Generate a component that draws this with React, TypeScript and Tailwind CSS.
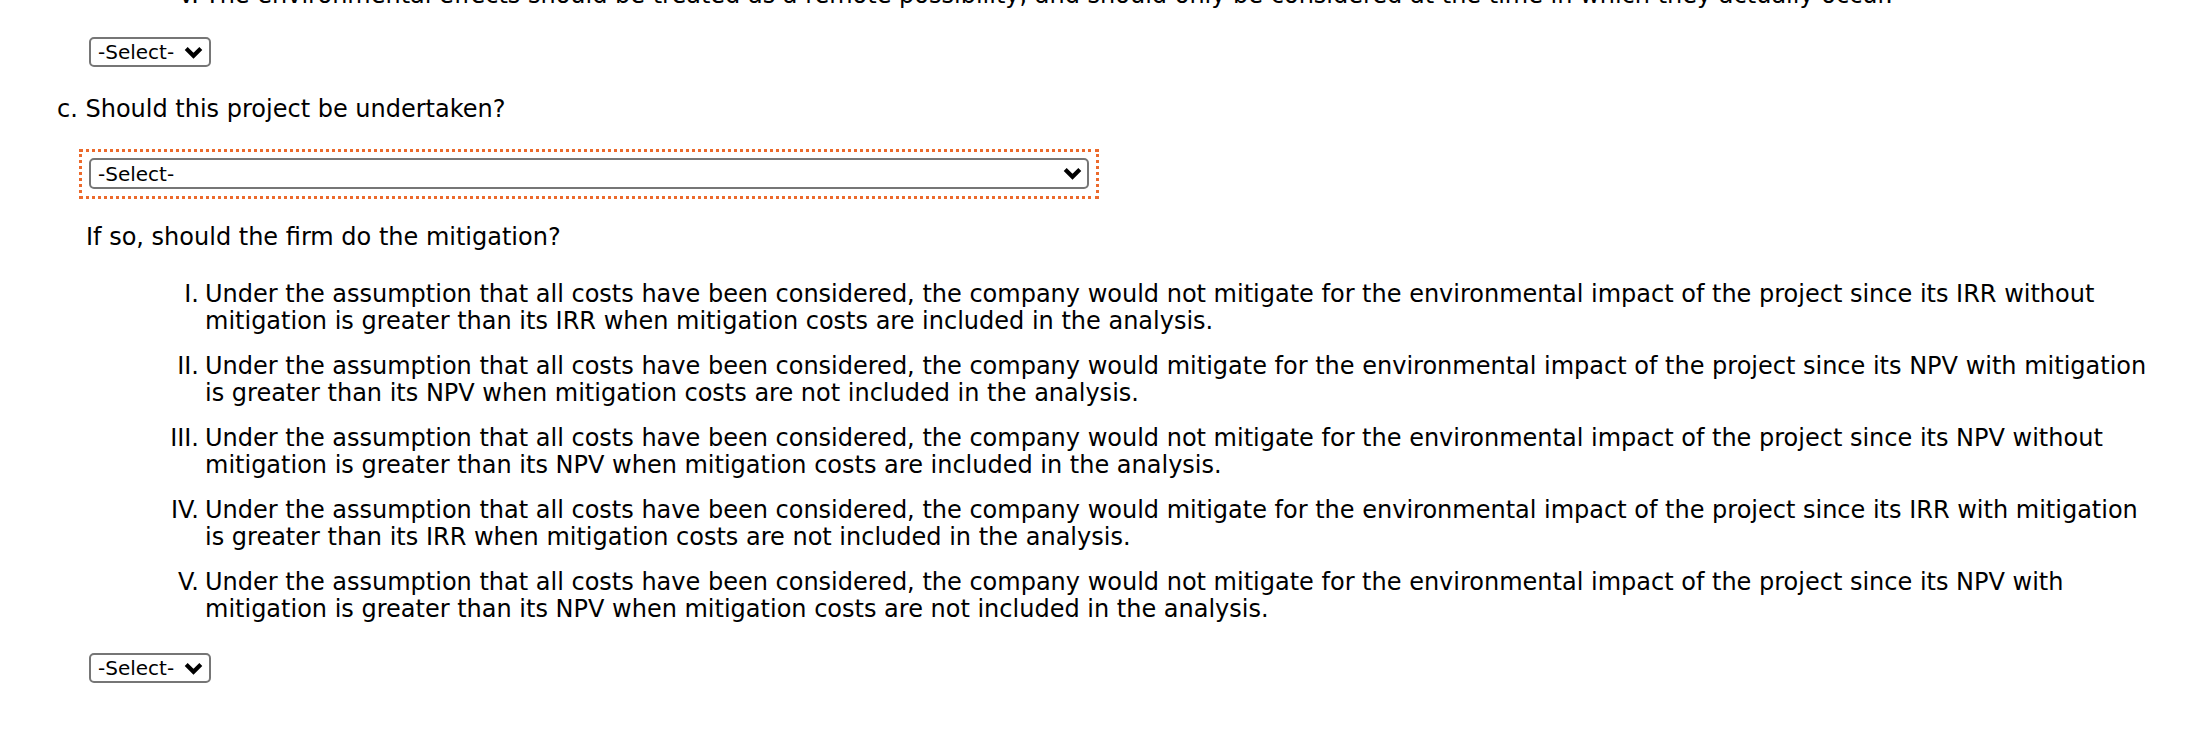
import React from "react";

const items = [
  {
    n: "I.",
    lines: [
      "Under the assumption that all costs have been considered, the company would not mitigate for the environmental impact of the project since its IRR without",
      "mitigation is greater than its IRR when mitigation costs are included in the analysis.",
    ],
  },
  {
    n: "II.",
    lines: [
      "Under the assumption that all costs have been considered, the company would mitigate for the environmental impact of the project since its NPV with mitigation",
      "is greater than its NPV when mitigation costs are not included in the analysis.",
    ],
  },
  {
    n: "III.",
    lines: [
      "Under the assumption that all costs have been considered, the company would not mitigate for the environmental impact of the project since its NPV without",
      "mitigation is greater than its NPV when mitigation costs are included in the analysis.",
    ],
  },
  {
    n: "IV.",
    lines: [
      "Under the assumption that all costs have been considered, the company would mitigate for the environmental impact of the project since its IRR with mitigation",
      "is greater than its IRR when mitigation costs are not included in the analysis.",
    ],
  },
  {
    n: "V.",
    lines: [
      "Under the assumption that all costs have been considered, the company would not mitigate for the environmental impact of the project since its NPV with",
      "mitigation is greater than its NPV when mitigation costs are not included in the analysis.",
    ],
  },
];

const Chevron = () => (
  <svg width="19" height="13" viewBox="0 0 19 13" className="shrink-0">
    <path d="M2.2 2.6 L9.5 9.8 L16.8 2.6" fill="none" stroke="black" strokeWidth={4.2} />
  </svg>
);

// fake select box, drawn the way Chrome on mac renders it at 2x
const SelectBox = ({ wide }: { wide?: boolean }) => (
  <div
    className={
      wide
        ? "flex items-center justify-between w-[1000px] h-[31px] border-2 border-[#767676] rounded-[5px] bg-white pl-[7px] pr-[5px] text-[20px] leading-none"
        : "flex items-center justify-between w-[122px] h-[30px] border-2 border-[#767676] rounded-[5px] bg-white pl-[7px] pr-[6px] text-[20px] leading-none"
    }
  >
    <span>-Select-</span>
    <Chevron />
  </div>
);

const Row = ({ n, lines }: { n: string; lines: string[] }) => (
  <div className="flex">
    <div className="w-[205px] shrink-0 text-right pr-[6px]">{n}</div>
    <div className="flex flex-col">
      {lines.map((l, i) => (
        <span key={i} className="whitespace-nowrap">
          {l}
        </span>
      ))}
    </div>
  </div>
);

export default function App() {
  return (
    <div className="h-[740px] overflow-hidden bg-white text-black font-['DejaVu_Sans',Verdana,sans-serif] text-[24px] leading-[27px]">
      {/* last line of the previous question, cut off at the top */}
      <div className="-mt-[18px]">
        <Row
          n="V."
          lines={[
            "The environmental effects should be treated as a remote possibility, and should only be considered at the time in which they actually occur.",
          ]}
        />
      </div>

      <div className="mt-[28px] ml-[89px]">
        <SelectBox />
      </div>

      <p className="mt-[29px] ml-[57px]">c. Should this project be undertaken?</p>

      <div className="mt-[26px] ml-[79px] w-[1020px] border-[3px] border-dotted border-[#ec6a2c] pl-[7px] pt-[6px] pb-[7px]">
        <SelectBox wide />
      </div>

      <p className="mt-[25px] ml-[86px]">If so, should the firm do the mitigation?</p>

      <div className="mt-[30px] flex flex-col gap-[18px]">
        {items.map((it) => (
          <Row key={it.n} n={it.n} lines={it.lines} />
        ))}
      </div>

      <div className="mt-[30px] ml-[89px]">
        <SelectBox />
      </div>
    </div>
  );
}
